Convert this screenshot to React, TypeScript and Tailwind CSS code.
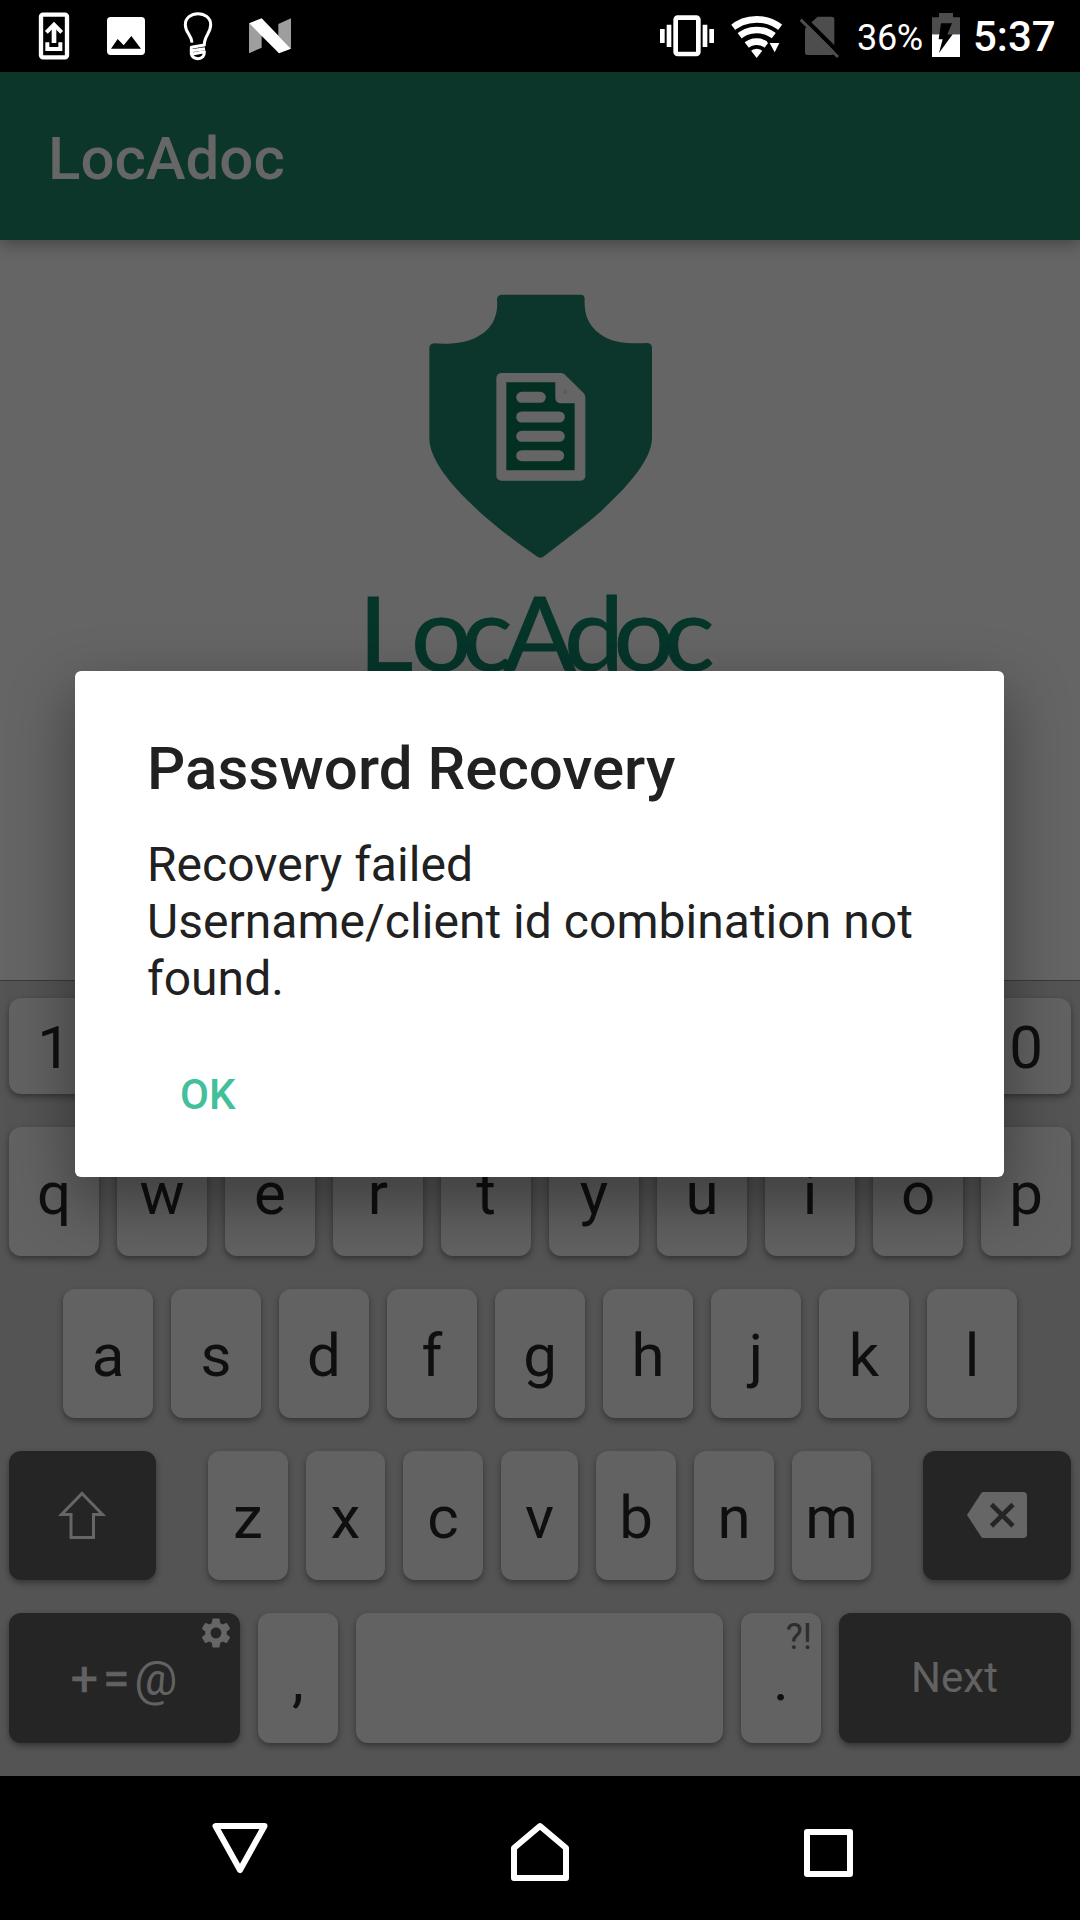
import React from "react";
import { MdSettings } from "react-icons/md";

function StatusBar() {
  return (
    <div className="flex h-[72px] w-full items-center bg-black text-white">
      <svg className="h-[72px] w-[320px] shrink-0" viewBox="0 0 960 216">
        <rect x="123" y="44" width="78" height="128" rx="6" fill="none" stroke="#fff" strokeWidth="13" />
        <path d="M139 97 L162 74 L185 97" fill="none" stroke="#fff" strokeWidth="12" />
        <path d="M162 80V129" stroke="#fff" strokeWidth="14" />
        <path d="M142 127V147H181V127" fill="none" stroke="#fff" strokeWidth="12" />
        <path
          fillRule="evenodd"
          fill="#fff"
          d="M332 51H424Q435 51 435 62V154Q435 165 424 165H332Q321 165 321 154V62Q321 51 332 51ZM333 146H423L394 108L371 136L353 117Z"
        />
        <g fill="none" stroke="#fff" strokeWidth="9" strokeLinecap="butt" strokeLinejoin="round">
          <path d="M576 128C575 104 556 100 556 74C556 54 573 41 594 41C615 41 632 54 632 74C632 100 612 108 613 135L574 142V152L615 146" />
          <path d="M574 150V163L613 155C614 168 606 176 594 176C584 176 577 172 574 163" />
        </g>
        <path d="M747 70L785 105V143L747 160Z" fill="#9e9e9e" />
        <path d="M835 72L873 55V146L835 107Z" fill="#9e9e9e" />
        <path d="M747 70L785 55L873 146L837 160Z" fill="#fff" />
      </svg>
      <svg className="ml-[320px] h-[72px] w-[210px] shrink-0" viewBox="0 0 630 216">
        <rect x="107" y="53" width="68" height="109" rx="6" fill="none" stroke="#fff" strokeWidth="14" />
        <path d="M60 87h14v42H60zM80 74h14v67H80zM188 74h14v67h-14zM208 87h14v42h-14z" fill="#fff" />
        <clipPath id="fan">
          <path d="M350 174L268 67V30H432V67Z" />
        </clipPath>
        <g clipPath="url(#fan)" fill="none" stroke="#fff">
          <circle cx="350" cy="174" r="116" strokeWidth="20" />
          <circle cx="350" cy="174" r="84" strokeWidth="20" />
          <circle cx="350" cy="174" r="49" strokeWidth="20" />
          <circle cx="350" cy="174" r="14" strokeWidth="28" />
        </g>
        <path d="M380 122H430V160L404 172Z" fill="#000" />
        <path d="M389 129H418L404 157Z" fill="#fff" />
        <path d="M533 50H575Q583 50 583 58V157Q583 165 575 165H503Q495 165 495 157V86L513 68Z" fill="#4d4d4d" />
        <path d="M488 50L603 164" stroke="#000" strokeWidth="13" />
        <path d="M482 59L594 171" stroke="#4d4d4d" strokeWidth="9" />
      </svg>
      <span className="ml-[7px] mt-[3px] w-[75px] shrink-0 text-[36px] leading-[42px] tracking-[-0.3px]">36%</span>
      <svg className="h-[72px] w-[28px] shrink-0" viewBox="0 0 84 216">
        <path d="M21 39H63V52H84V103H0V52H21Z" fill="#4d4d4d" />
        <path d="M0 103H84V171H0Z" fill="#fff" />
        <path d="M27 70H60L46 103H62L21 159L32 118H20Z" fill="#000" />
      </svg>
      <span className="ml-[13px] mt-[2px] text-[42px] font-medium leading-[50px]">5:37</span>
    </div>
  );
}

function Logo() {
  return (
    <svg className="h-[436px] w-[400px]" viewBox="0 0 400 436">
      <g transform="scale(0.33333)">
        <path
          fill="#0c362b"
          d="M484 104H723Q733 104 734 116C732 165 745 205 800 234C838 252 880 251 922 249Q936 251 936 264V535C934 600 868 674 785 752C735 796 670 843 613 888Q601 898 589 888C530 848 465 797 415 752C325 670 268 594 268 535V264Q269 251 284 250C320 254 370 250 405 234C460 208 475 165 471 116Q474 105 484 104Z"
        />
        <path d="M499 367H647V415L660 430H704V631H499Z" fill="#042f23" />
        <path
          fill="#656565"
          fillRule="evenodd"
          d="M484 339H665Q673 341 678 347L730 398Q736 405 736 412V648Q735 661 722 662H484Q470 661 469 648V354Q470 340 484 339ZM499 367V631H704V430H660Q647 429 646 415V367Z"
        />
        <g stroke="#656565" strokeWidth="33" strokeLinecap="round">
          <path d="M545 412H601M545 471H658M545 529H658M545 587H656" />
        </g>
        <path d="M671 386L684 396L671 403Z" fill="#525d59" />
      </g>
      <text
        transform="scale(1.05 1)"
        x="17.3 67.6 115.7 155.8 213.3 260.5 308"
        y="411.5"
        fill="#06352a"
        stroke="#06352a"
        strokeWidth="0.8"
        fontSize="102"
        fontFamily="Lato, sans-serif"
      >
        LocAdoc
      </text>
    </svg>
  );
}

const keyBase =
  "flex shrink-0 items-center justify-center rounded-[12px] shadow-[0_3px_6px_rgba(0,0,0,0.38)]";

function Key({ label, size }: { label: string; size: string }) {
  return (
    <div className={`${keyBase} ${size} bg-[#626262] pt-[4px] text-[60px] leading-[70px] text-[#0f0f0f]`}>
      {label}
    </div>
  );
}

function Keyboard() {
  return (
    <div className="flex h-[796px] w-full flex-col border-t border-[#3a3a3a] bg-[#545454] px-[9px] pt-[17px]">
      <div className="flex gap-[18px]">
        {"1234567890".split("").map((k) => (
          <Key key={k} label={k} size="h-[96px] w-[90px]" />
        ))}
      </div>
      <div className="mt-[33px] flex gap-[18px]">
        {"qwertyuiop".split("").map((k) => (
          <Key key={k} label={k} size="h-[129px] w-[90px]" />
        ))}
      </div>
      <div className="mt-[33px] flex justify-center gap-[18px]">
        {"asdfghjkl".split("").map((k) => (
          <Key key={k} label={k} size="h-[129px] w-[90px]" />
        ))}
      </div>
      <div className="mt-[33px] flex justify-between">
        <div className={`${keyBase} h-[129px] w-[147px] bg-[#252525] pr-[2px]`}>
          <svg className="h-[50px] w-[50px]" viewBox="0 0 50 50">
            <path d="M25 2.500L45.500 23.500H36.500V46.500H14V23.500H4.500Z" fill="none" stroke="#666" strokeWidth="3" />
          </svg>
        </div>
        <div className="flex gap-[18px]">
          {"zxcvbnm".split("").map((k) => (
            <Key key={k} label={k} size={k === "v" ? "h-[129px] w-[77px]" : k === "m" || k === "x" ? "h-[129px] w-[79px]" : "h-[129px] w-[80px]"} />
          ))}
        </div>
        <div className={`${keyBase} h-[129px] w-[148px] bg-[#252525]`}>
          <svg className="mb-[1px] h-[46px] w-[60px]" viewBox="0 0 60 46">
            <path d="M16 0H56Q60 0 60 4V42Q60 46 56 46H16Q15 46 14 44.500L0 23L14 1.500Q15 0 16 0Z" fill="#666" />
            <path d="M24.500 12.500L46 34M46 12.500L24.500 34" stroke="#252525" strokeWidth="4.600" />
          </svg>
        </div>
      </div>
      <div className="mt-[33px] flex gap-[18px]">
        <div className={`${keyBase} relative h-[130px] w-[231px] gap-[5px] bg-[#252525] pr-[1px] pt-[2px] text-[48px] leading-[56px] text-[#626262]`}>
          <span className="[-webkit-text-stroke:0.7px_#626262]">+</span>
          <span className="[-webkit-text-stroke:0.7px_#626262]">=</span>
          <span>@</span>
          <MdSettings className="absolute right-[6px] top-[2px] h-[36px] w-[36px] text-[#666]" />
        </div>
        <Key label="," size="h-[130px] w-[80px]" />
        <Key label="" size="h-[130px] w-[367px]" />
        <div className="relative">
          <Key label="." size="h-[130px] w-[80px]" />
          <span className="absolute right-[9px] top-[3px] text-[36px] leading-[42px] text-[#2d2d2d]">?!</span>
        </div>
        <div className={`${keyBase} h-[130px] w-[232px] bg-[#252525] pr-[1px] text-[42px] leading-[50px] text-[#626262]`}>Next</div>
      </div>
    </div>
  );
}

function NavBar() {
  return (
    <div className="flex h-[144px] w-full bg-black pl-[212px] pt-[44px]">
      <svg className="h-[64px] w-[56px]" viewBox="0 0 56 64" fill="none" stroke="#fff" strokeWidth="6" strokeLinejoin="round">
        <path d="M3.500 6H52.500L28 50Z" />
      </svg>
      <svg className="ml-[243px] h-[64px] w-[58px]" viewBox="0 0 58 64" fill="none" stroke="#fff" strokeWidth="6" strokeLinejoin="round">
        <path d="M3 28L29 6L55 28V58H3Z" />
      </svg>
      <svg className="ml-[235px] h-[64px] w-[49px]" viewBox="0 0 49 64" fill="none" stroke="#fff" strokeWidth="6" strokeLinejoin="round">
        <path d="M3 12H46V54H3Z" />
      </svg>
    </div>
  );
}

function Dialog() {
  return (
    <div className="absolute left-[75px] top-[671px] flex h-[506px] w-[929px] flex-col items-start rounded-[6px] bg-white px-[72px] pt-[63px] text-[#212121] shadow-[0_24px_60px_4px_rgba(0,0,0,0.36)]">
      <h2 className="text-[60px] font-medium leading-[70px] tracking-[0.05px]">Password Recovery</h2>
      <p className="mt-[32px] text-[48px] leading-[57px] tracking-[0.03px]">
        Recovery failed
        <br />
        Username/client id combination not
        <br />
        found.
      </p>
      <button className="ml-[33px] mt-[63px] text-[42px] font-medium leading-[50px] text-[#43bf9b]">OK</button>
    </div>
  );
}

export default function App() {
  return (
    <div className="relative flex h-[1920px] w-[1080px] flex-col overflow-hidden bg-[#656565] font-['Roboto',sans-serif]">
      <StatusBar />
      <header className="z-0 flex h-[168px] items-center bg-[#0d362b] pl-[48px] pt-[6px] text-[60px] font-medium leading-[70px] text-[#666] shadow-[0_5px_14px_rgba(0,0,0,0.3)]">
        LocAdoc
      </header>
      <main className="flex h-[740px] justify-center pt-[20px]">
        <Logo />
      </main>
      <Keyboard />
      <NavBar />
      <Dialog />
    </div>
  );
}
